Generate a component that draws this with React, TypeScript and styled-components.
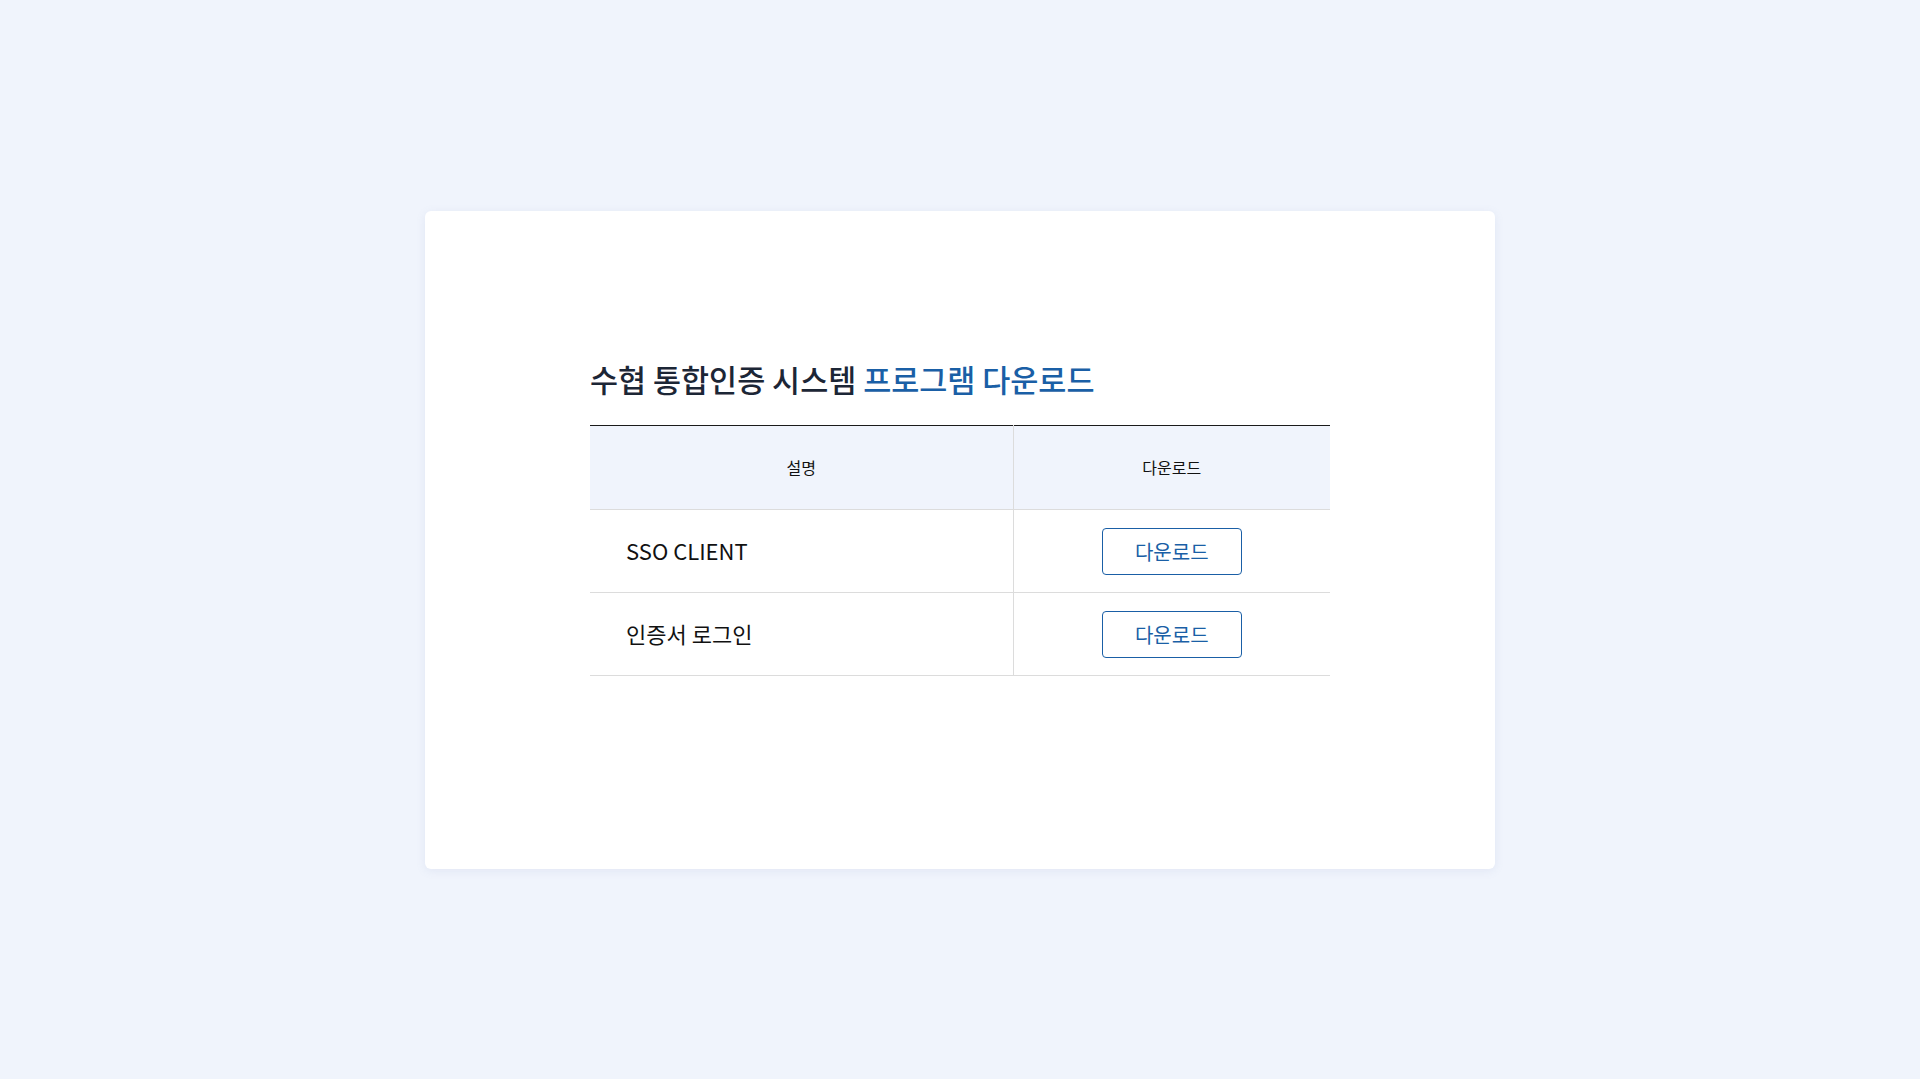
import React from "react";
import styled, { createGlobalStyle } from "styled-components";

const Global = createGlobalStyle`
  html, body {
    margin: 0;
    padding: 0;
    background: #f0f4fc;
    font-family: "Noto Sans CJK KR", "Noto Sans", sans-serif;
  }
  * { box-sizing: border-box; }
`;

const Page = styled.div`
  width: 100%;
  height: 1079px;
  display: flex;
  align-items: center;
  justify-content: center;
`;

const Card = styled.section`
  width: 1070px;
  height: 658px;
  background: #ffffff;
  border-radius: 6px;
  box-shadow: 0 2px 10px rgba(120, 140, 190, 0.12);
  padding: 148px 165px 0;
`;

const Title = styled.h2`
  margin: 0 0 26px;
  font-size: 30.5px;
  line-height: 40px;
  font-weight: 500;
  color: #1c2636;
`;

const Accent = styled.span`
  color: #1a5fa6;
`;

const Table = styled.table`
  width: 740px;
  border-collapse: collapse;
  border-top: 1px solid #1a1a1a;
`;

const HeadCell = styled.th<{ $w?: number }>`
  height: 84px;
  background: #f0f4fc;
  font-size: 16px;
  font-weight: 400;
  color: #111;
  text-align: center;
  border-bottom: 1px solid #dcdcdc;
  border-left: 1px solid #dcdcdc;
  width: ${(p) => (p.$w ? `${p.$w}px` : "auto")};
  &:first-child { border-left: none; }
`;

const Cell = styled.td<{ $center?: boolean }>`
  height: 83px;
  font-size: 22px;
  color: #111;
  border-bottom: 1px solid #dcdcdc;
  border-left: 1px solid #dcdcdc;
  padding: ${(p) => (p.$center ? "2px 0 0 0" : "0 0 2px 36px")};
  text-align: ${(p) => (p.$center ? "center" : "left")};
  vertical-align: middle;
  &:first-child { border-left: none; }
`;

const DownloadButton = styled.button`
  width: 140px;
  height: 47px;
  border: 1px solid #1a5fa6;
  border-radius: 4px;
  background: #fff;
  color: #1a5fa6;
  font-family: inherit;
  font-size: 20px;
  cursor: pointer;
  display: inline-flex;
  align-items: center;
  justify-content: center;
  vertical-align: middle;
`;

const rows = ["SSO CLIENT", "인증서 로그인"];

export default function App() {
  return (
    <>
      <Global />
      <Page>
        <Card>
          <Title>
            수협 통합인증 시스템 <Accent>프로그램 다운로드</Accent>
          </Title>
          <Table>
            <thead>
              <tr>
                <HeadCell $w={423}>설명</HeadCell>
                <HeadCell>다운로드</HeadCell>
              </tr>
            </thead>
            <tbody>
              {rows.map((r) => (
                <tr key={r}>
                  <Cell>{r}</Cell>
                  <Cell $center>
                    <DownloadButton type="button">다운로드</DownloadButton>
                  </Cell>
                </tr>
              ))}
            </tbody>
          </Table>
        </Card>
      </Page>
    </>
  );
}
